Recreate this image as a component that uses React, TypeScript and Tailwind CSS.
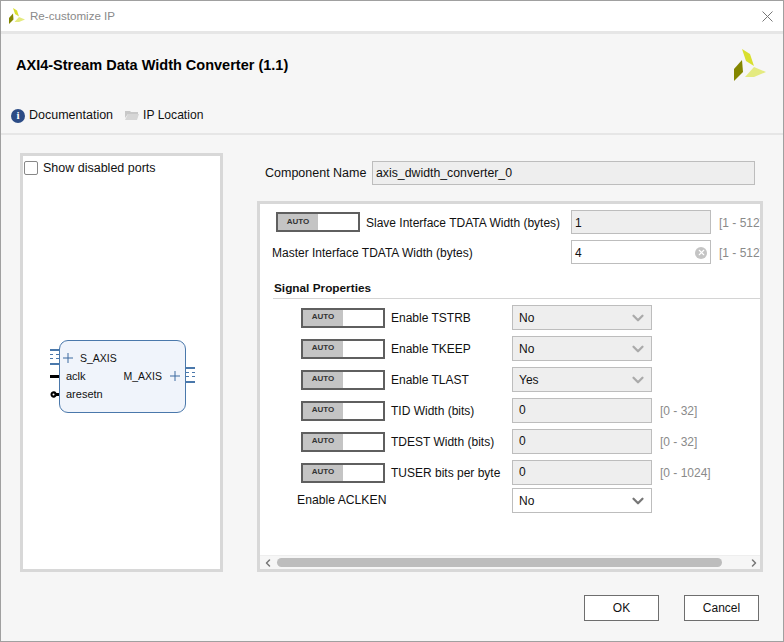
import { ChevronDown, ChevronLeft, ChevronRight, X } from 'lucide-react'

const XilinxLogo = ({ className }: { className: string }) => (
    <svg viewBox="0 0 32 32" className={className}>
        <polygon points="8,0 16,5 20,17 12,12" fill="#d9df2e" />
        <polygon points="20,18 32,23 20,28 11,28" fill="#e4ea80" />
        <polygon points="0,20 8,11 9,23 0,32" fill="#838600" />
    </svg>
)

function AutoToggle() {
    return (
        <div className="flex h-5 w-[84px] shrink-0 border-2 border-[#5f5f5f] bg-white">
            <div className="flex w-10 items-center justify-center bg-[#c4c4c4] text-[8px] font-bold text-[#333]">AUTO</div>
        </div>
    )
}

function Field({ value, disabled = true, clear = false, className }: { value: string; disabled?: boolean; clear?: boolean; className: string }) {
    return (
        <div className={`flex items-center justify-between border border-[#bdbdbd] pl-[3px] pr-[3px] text-xs text-[#111] ${disabled ? 'bg-[#eeeeee]' : 'bg-white'} ${className}`}>
            <span>{value}</span>
            {clear && (
                <span className="flex h-3 w-3 items-center justify-center rounded-full bg-[#c4c4c4]">
                    <X size={9} strokeWidth={3} className="text-white" />
                </span>
            )}
        </div>
    )
}

function Select({ value, disabled = true }: { value: string; disabled?: boolean }) {
    return (
        <div className={`ml-auto flex h-[25px] w-[140px] items-center justify-between border border-[#bdbdbd] pl-[6px] pr-1 text-xs text-[#111] ${disabled ? 'bg-[#eeeeee]' : 'bg-white'}`}>
            <span>{value}</span>
            <ChevronDown size={18} strokeWidth={3} className={disabled ? 'text-[#aaaaaa]' : 'text-[#777777]'} />
        </div>
    )
}

const signalRows = [
    { label: 'Enable TSTRB', value: 'No' },
    { label: 'Enable TKEEP', value: 'No' },
    { label: 'Enable TLAST', value: 'Yes' },
]

const widthRows = [
    { label: 'TID Width (bits)', value: '0', range: '[0 - 32]' },
    { label: 'TDEST Width (bits)', value: '0', range: '[0 - 32]' },
    { label: 'TUSER bits per byte', value: '0', range: '[0 - 1024]' },
]

function BusPin() {
    return (
        <div className="flex h-4 w-[9px] flex-col justify-center gap-[3px] border-y-2 border-[#4a78ab]">
            <div className="h-px border-t border-dashed border-[#4a78ab]" />
            <div className="h-px border-t border-dashed border-[#4a78ab]" />
        </div>
    )
}

function Plus() {
    return (
        <svg viewBox="0 0 10 10" className="h-[10px] w-[10px] shrink-0 text-[#3c6aa0]">
            <path d="M0 5h10M5 0v10" stroke="currentColor" strokeWidth="1" />
        </svg>
    )
}

function BlockDiagram() {
    return (
        <div className="ml-[27px] mt-[163px] flex w-[145px] items-stretch">
            <div className="flex w-[9px] flex-col items-end pt-[9px]">
                <BusPin />
                <div className="mt-[10px] h-[3px] w-[9px] bg-black" />
                <svg viewBox="0 0 9 7" className="mt-[13px] h-[7px] w-[9px]">
                    <path d="M9 2H6.500A3.200 3.200 0 1 0 6.500 5H9z" fill="#000" />
                    <circle cx="3.500" cy="3.500" r="1" fill="#fff" />
                </svg>
            </div>
            <div className="flex h-[73px] w-[127px] flex-col rounded-[9px] border border-[#4a78ab] bg-[#f0f4fb] pt-[8px] text-[11px] leading-[18px] text-[#111]">
                <div className="flex items-center">
                    <span className="ml-[3px] mr-[7px]"><Plus /></span>
                    <span className="text-[10.5px]">S_AXIS</span>
                </div>
                <div className="flex items-center justify-between pl-[6px] pr-[5px]">
                    <span>aclk</span>
                    <span className="flex items-center gap-[8px] text-[10.5px]">M_AXIS <Plus /></span>
                </div>
                <div className="pl-[6px]">aresetn</div>
            </div>
            <div className="flex w-[9px] flex-col pt-[27px]">
                <BusPin />
            </div>
        </div>
    )
}

export default function App() {
    return (
        <div className="flex h-[642px] w-[784px] flex-col border border-[#a0a0a0] bg-[#f6f6f6] font-['Liberation_Sans',Arial,sans-serif] text-xs text-[#111]">
            <div className="flex h-[33px] shrink-0 items-center justify-between border-b-[3px] border-[#e6e6e6] bg-white pl-2 pr-[10px]">
                <div className="flex items-center gap-[5px]">
                    <XilinxLogo className="h-4 w-4" />
                    <span className="text-[11.6px] text-[#8a8a8a]">Re-customize IP</span>
                </div>
                <svg viewBox="0 0 11 11" className="h-[11px] w-[11px]">
                    <path d="M0.5 0.5l10 10M10.5 0.5l-10 10" stroke="#777" strokeWidth="1" fill="none" />
                </svg>
            </div>

            <div className="flex h-[64px] shrink-0 items-center justify-between pl-[15px] pr-[17px]">
                <h1 className="text-[14.5px] font-bold text-black">AXI4-Stream Data Width Converter (1.1)</h1>
                <XilinxLogo className="-mt-[2px] h-8 w-8" />
            </div>

            <div className="flex h-[37px] shrink-0 items-center gap-[12px] border-b-2 border-[#e6e6e6] pl-[10px] text-[12.5px]">
                <div className="flex items-center gap-1">
                    <span className="flex h-[14px] w-[14px] items-center justify-center rounded-full bg-[#2c4c86] font-['Liberation_Serif',serif] text-[11px] font-bold text-white">i</span>
                    <span>Documentation</span>
                </div>
                <div className="flex items-center gap-1">
                    <svg viewBox="0 0 14 12" className="h-3 w-[14px]">
                        <path d="M0 2h5l1 1h7v2H3L0 9z" fill="#c8c8c8" />
                        <path d="M3 5h11l-2 6H0z" fill="#d6d6d6" />
                    </svg>
                    <span className="text-[12.1px]">IP Location</span>
                </div>
            </div>

            <div className="flex flex-1 gap-[34px] pl-[19px] pt-[18px]">
                <div className="h-[419px] w-[203px] shrink-0 border-[3px] border-[#d8d8d8] bg-white">
                    <div className="flex items-center gap-[5px] pl-[1px] pt-[4px] text-[12.5px]">
                        <div className="h-[14px] w-[14px] rounded-[2px] border border-[#888] bg-white" />
                        <span>Show disabled ports</span>
                    </div>
                    <BlockDiagram />
                </div>

                <div className="flex w-[506px] flex-col pt-2">
                    <div className="flex h-[24px] items-center pl-2 pr-2">
                        <span className="w-[107px] pt-px text-[12.5px]">Component Name</span>
                        <Field value="axis_dwidth_converter_0" className="h-[24px] flex-1 pt-px text-[12.3px]" />
                    </div>

                    <div className="mt-4 flex h-[371px] flex-col overflow-hidden border-[3px] border-[#d8d8d8] bg-white">
                        <div className="flex flex-1 flex-col overflow-hidden">
                            <div className="mt-[6px] flex h-[24px] items-center pl-4">
                                <AutoToggle />
                                <span className="ml-[6px] w-[205px] shrink-0 whitespace-nowrap pt-px">Slave Interface TDATA Width (bytes)</span>
                                <Field value="1" className="h-[24px] w-[140px] shrink-0 pt-px" />
                                <span className="ml-2 whitespace-nowrap pt-px text-[#8a8a8a]">[1 - 512]</span>
                            </div>
                            <div className="mt-[6px] flex h-[24px] items-center pl-3">
                                <span className="w-[299px] shrink-0 whitespace-nowrap pt-px">Master Interface TDATA Width (bytes)</span>
                                <Field value="4" disabled={false} clear className="h-[24px] w-[140px] shrink-0 pt-px" />
                                <span className="ml-2 whitespace-nowrap pt-px text-[#8a8a8a]">[1 - 512]</span>
                            </div>
                            <div className="mt-[17px] ml-[13px] border-b border-[#d4d4d4] pb-[3px] pl-px text-[11.8px] font-bold leading-[14px]">Signal Properties</div>

                            <div className="mt-[6px] flex w-[392px] flex-col gap-[6px] pl-[41px]">
                                {signalRows.map((row) => (
                                    <div key={row.label} className="flex h-[25px] items-center">
                                        <AutoToggle />
                                        <span className="ml-[6px]">{row.label}</span>
                                        <Select value={row.value} />
                                    </div>
                                ))}
                                {widthRows.map((row) => (
                                    <div key={row.label} className="relative flex h-[25px] items-center">
                                        <AutoToggle />
                                        <span className="ml-[6px]">{row.label}</span>
                                        <Field value={row.value} className="ml-auto h-[25px] w-[140px] shrink-0 pb-px pl-[6px]" />
                                        <span className="absolute left-[359px] whitespace-nowrap text-[#8a8a8a]">{row.range}</span>
                                    </div>
                                ))}
                                <div className="-mt-[3px] flex h-[25px] items-center">
                                    <span className="-ml-1 text-[12.2px]">Enable ACLKEN</span>
                                    <Select value="No" disabled={false} />
                                </div>
                            </div>
                        </div>

                        <div className="flex h-[14px] shrink-0 items-center border-t border-[#eeeeee] bg-[#f6f6f6] pl-[2px]">
                            <ChevronLeft size={12} strokeWidth={3} className="text-[#777]" />
                            <div className="ml-[3px] h-[9px] flex-1 rounded-full bg-[#bdbdbd]" />
                            <div className="w-[26px]" />
                            <ChevronRight size={12} strokeWidth={3} className="text-[#777]" />
                        </div>
                    </div>
                </div>
            </div>

            <div className="flex h-[69px] shrink-0 items-start justify-end gap-[25px] pr-6 pt-[23px]">
                <button className="h-[26px] w-[75px] border border-[#6e6e6e] bg-white text-xs">OK</button>
                <button className="h-[26px] w-[75px] border border-[#6e6e6e] bg-white text-xs">Cancel</button>
            </div>
        </div>
    )
}
